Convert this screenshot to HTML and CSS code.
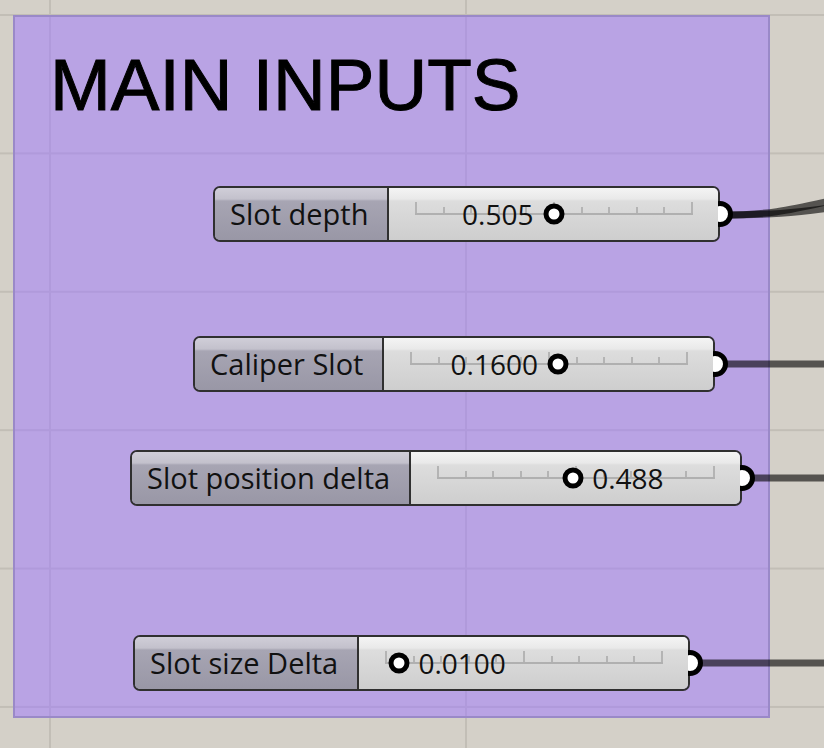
FILE: index.html
```html
<!DOCTYPE html>
<html>
<head>
<meta charset="utf-8">
<link rel="stylesheet" href="styles.css">
</head>
<body>
<div class="canvas">
  <div class="group">
    <div class="title">MAIN INPUTS</div>

    <div class="slider s1">
      <div class="label">Slot depth</div>
      <div class="value">
        <div class="track">
          <div class="ticks"><i class="tall"></i><i></i><i></i><i></i><i></i><i class="tall"></i><i></i><i></i><i></i><i></i><i class="tall"></i></div>
          <div class="thumb" style="left:50%"><span class="num before">0.505</span></div>
        </div>
      </div>
      <span class="grip"></span>
    </div>

    <div class="slider s2">
      <div class="label">Caliper Slot</div>
      <div class="value">
        <div class="track">
          <div class="ticks"><i class="tall"></i><i></i><i></i><i></i><i></i><i class="tall"></i><i></i><i></i><i></i><i></i><i class="tall"></i></div>
          <div class="thumb" style="left:53.4%"><span class="num before">0.1600</span></div>
        </div>
      </div>
      <span class="grip"></span>
    </div>

    <div class="slider s3">
      <div class="label">Slot position delta</div>
      <div class="value">
        <div class="track">
          <div class="ticks"><i class="tall"></i><i></i><i></i><i></i><i></i><i class="tall"></i><i></i><i></i><i></i><i></i><i class="tall"></i></div>
          <div class="thumb" style="left:48.8%"><span class="num after">0.488</span></div>
        </div>
      </div>
      <span class="grip"></span>
    </div>

    <div class="slider s4">
      <div class="label">Slot size Delta</div>
      <div class="value">
        <div class="track">
          <div class="ticks"><i class="tall"></i><i></i><i></i><i></i><i></i><i class="tall"></i><i></i><i></i><i></i><i></i><i class="tall"></i></div>
          <div class="thumb" style="left:5%"><span class="num after">0.0100</span></div>
        </div>
      </div>
      <span class="grip"></span>
    </div>
  </div>

  <svg class="wires" width="824" height="748" viewBox="0 0 824 748">
    <path d="M720 215 C 770 215, 790 210, 830 201" />
    <path d="M720 215 C 770 215, 795 213, 830 208" />
    <path d="M715 364 L 830 364" />
    <path d="M742 478 L 830 478" />
    <path d="M690 663 L 830 663" />
  </svg>
</div>
</body>
</html>
```

FILE: styles.css
```css
* { box-sizing: border-box; }

html, body {
  margin: 0;
  padding: 0;
}

body {
  width: 824px;
  height: 748px;
  overflow: hidden;
  font-family: "Open Sans", "Noto Sans", sans-serif;
}

.canvas {
  position: relative;
  width: 824px;
  height: 748px;
  overflow: hidden;
  padding: 15px 0 0 13px;
  background-color: #d4d0c8;
  background-image:
    linear-gradient(to bottom, #c2beb6 2px, transparent 2px),
    linear-gradient(to right, #c2beb6 2px, transparent 2px);
  background-size: 100% 138.4px, 416px 100%;
  background-position: 0 14px, 49px 0;
}

.group {
  width: 757px;
  height: 703px;
  border: 2px solid #9a89c8;
  background: rgba(158, 118, 255, 0.5);
  display: flex;
  flex-direction: column;
  align-items: flex-start;
}

.title {
  margin: 32px 0 0 35px;
  font-family: "Liberation Sans", Arial, sans-serif;
  font-size: 73px;
  line-height: 72px;
  color: #000;
  -webkit-text-stroke: 1px #000;
  white-space: nowrap;
}

.slider {
  position: relative;
  z-index: 2;
  display: flex;
  height: 56px;
  border: 2px solid #303030;
  border-radius: 7px;
}

.s1 { margin: 65px 0 0 198px; }
.s2 { margin: 94px 0 0 178px; }
.s3 { margin: 58px 0 0 115px; }
.s4 { margin: 129px 0 0 118px; }

.label {
  height: 100%;
  padding-left: 15px;
  display: flex;
  align-items: center;
  font-size: 29px;
  line-height: 28px;
  color: #111;
  white-space: nowrap;
  border-right: 2px solid #303030;
  border-radius: 5px 0 0 5px;
  background: linear-gradient(to bottom, #d0ced8 0, #c3c1cc 11px, #a7a5b3 13px, #9997a6 100%);
}

.s1 .label { width: 174px; }
.s2 .label { width: 189px; }
.s3 .label { width: 279px; }
.s4 .label { width: 224px; }

.value {
  width: 329px;
  height: 100%;
  border-radius: 0 5px 5px 0;
  background: linear-gradient(to bottom, #f4f4f4 0, #e9e9e9 11px, #dddddd 13px, #cecece 100%);
  padding: 14px 0 0 26px;
}

.track {
  position: relative;
  width: 278px;
  height: 13px;
}

.track::after {
  content: "";
  position: absolute;
  left: 0;
  right: 0;
  bottom: 0;
  height: 2px;
  background: #b0b0b0;
}

.ticks {
  display: flex;
  justify-content: space-between;
  align-items: flex-end;
  height: 100%;
}

.ticks i {
  display: block;
  width: 2px;
  height: 8px;
  background: #b4b4b4;
}

.ticks i.tall {
  height: 13px;
}

.thumb {
  position: absolute;
  bottom: 1px;
  width: 21px;
  height: 21px;
  border: 5px solid #000;
  border-radius: 50%;
  background: #fff;
  transform: translate(-50%, 50%);
  z-index: 1;
}

.num {
  position: absolute;
  top: -9px;
  font-size: 28px;
  line-height: 28px;
  color: #111;
  white-space: nowrap;
}

.num.before { right: calc(100% + 15px); }
.num.after { left: calc(100% + 14px); }

.grip {
  position: absolute;
  z-index: -1;
  top: 50%;
  right: -15px;
  width: 26px;
  height: 26px;
  border: 5px solid #000;
  border-radius: 50%;
  background: #fff;
  transform: translateY(-50%);
}

.wires {
  position: absolute;
  left: 0;
  top: 0;
  z-index: 1;
  fill: none;
  stroke: rgba(0, 0, 0, 0.6);
  stroke-width: 7px;
}
```
